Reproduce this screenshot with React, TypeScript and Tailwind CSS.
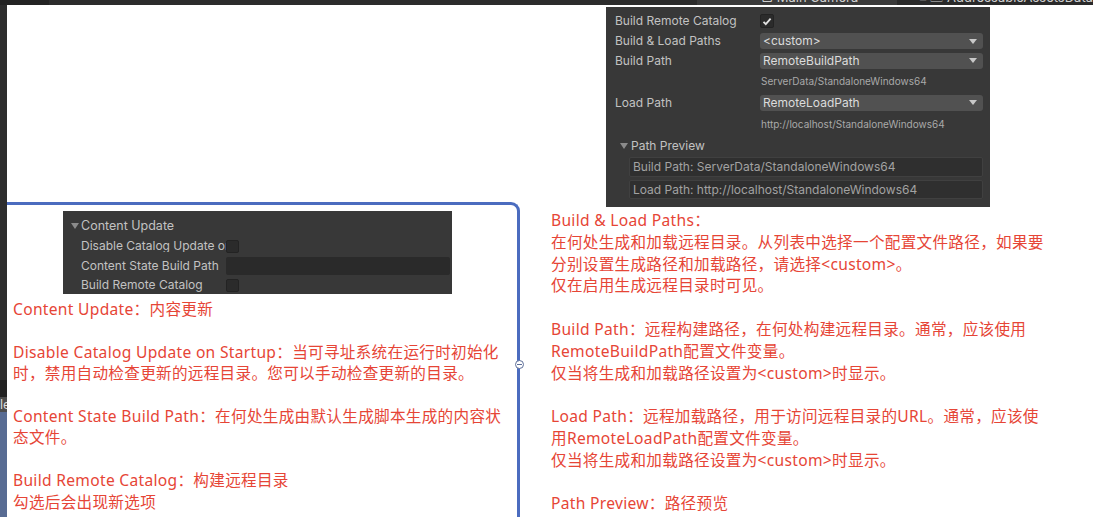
import React from 'react';

const RED = 'text-[#e64536]';

function Arrow() {
  return (
    <svg width="8" height="5" viewBox="0 0 8 5" className="shrink-0">
      <path d="M0 0h8L4 5z" fill="#c8c8c8" />
    </svg>
  );
}

function Fold() {
  return (
    <svg width="8" height="6" viewBox="0 0 8 6" className="shrink-0">
      <path d="M0 0h8L4 6z" fill="#8a8a8a" />
    </svg>
  );
}

function Dropdown({ value }: { value: string }) {
  return (
    <div className="w-[223px] h-[16px] bg-[#515151] rounded-[3px] flex items-center justify-between pl-[3px] pr-[6px] text-[12px] text-[#dcdcdc]">
      <span>{value}</span>
      <Arrow />
    </div>
  );
}

function Checkbox({ checked, size = 14 }: { checked?: boolean; size?: number }) {
  return (
    <div
      className="bg-[#2b2b2b] border border-[#232323] rounded-[2px] flex items-center justify-center"
      style={{ width: size, height: size }}
    >
      {checked && (
        <svg width="10" height="9" viewBox="0 0 10 9">
          <path d="M1.5 4.8 3.8 7.2 8.6 1.6" stroke="#e2e2e2" strokeWidth="1.8" fill="none" />
        </svg>
      )}
    </div>
  );
}

function RemotePanel() {
  return (
    <div className="w-[384px] h-[200px] bg-[#383838] pt-[4px] pl-[9px] pr-[7px] pb-[8px] text-[12px] text-[#c2c2c2] font-['Inter',sans-serif] leading-none">
      <div className="h-[20px] flex items-center">
        <div className="w-[145px]">Build Remote Catalog</div>
        <Checkbox checked />
      </div>
      <div className="h-[20px] flex items-center">
        <div className="w-[145px]">Build &amp; Load Paths</div>
        <Dropdown value="<custom>" />
      </div>
      <div className="h-[19px] flex items-center">
        <div className="w-[145px]">Build Path</div>
        <Dropdown value="RemoteBuildPath" />
      </div>
      <div className="h-[22px] flex items-center pl-[146px] text-[10px] text-[#a9a9a9]">
        ServerData/StandaloneWindows64
      </div>
      <div className="h-[21px] flex items-center">
        <div className="w-[145px]">Load Path</div>
        <Dropdown value="RemoteLoadPath" />
      </div>
      <div className="h-[22px] flex items-center pl-[146px] text-[10px] text-[#a9a9a9]">
        http://localhost/StandaloneWindows64
      </div>
      <div className="h-[21px] flex items-center gap-[3px] pl-[5px] text-[12px]">
        <Fold />
        <span>Path Preview</span>
      </div>
      <div className="ml-[14px] mt-[1px] h-[20px] bg-[#2f2f2f] border border-[#404040] rounded-[2px] flex items-center pl-[3px] text-[12px] text-[#a2a2a2]">
        Build Path: ServerData/StandaloneWindows64
      </div>
      <div className="ml-[14px] mt-[3px] h-[19px] bg-[#2f2f2f] border border-[#404040] rounded-[2px] flex items-center pl-[3px] text-[12px] text-[#a2a2a2]">
        Load Path: http://localhost/StandaloneWindows64
      </div>
    </div>
  );
}

function ContentUpdatePanel() {
  return (
    <div className="w-[389px] h-[83px] bg-[#383838] pt-[5px] pl-[8px] pr-[2px] overflow-hidden text-[12px] text-[#c2c2c2] font-['Inter',sans-serif] leading-none">
      <div className="h-[20px] flex items-center gap-[2px] text-[12.5px]">
        <Fold />
        <span>Content Update</span>
      </div>
      <div className="h-[20px] flex items-center pl-[10px]">
        <div className="w-[145px] overflow-hidden whitespace-nowrap">Disable Catalog Update on Startup</div>
        <Checkbox size={13} />
      </div>
      <div className="h-[20px] flex items-center pl-[10px]">
        <div className="w-[145px] whitespace-nowrap">Content State Build Path</div>
        <div className="w-[224px] h-[18px] bg-[#2a2a2a] rounded-[2px]" />
      </div>
      <div className="h-[18px] flex items-center pl-[10px]">
        <div className="w-[145px] whitespace-nowrap">Build Remote Catalog</div>
        <Checkbox size={13} />
      </div>
    </div>
  );
}

function Para({ lines, last }: { lines: string[]; last?: boolean }) {
  return (
    <div className={last ? '' : 'mb-[1lh]'}>
      {lines.map((l) => (
        <div key={l} className="whitespace-nowrap">
          {l}
        </div>
      ))}
    </div>
  );
}

const leftNotes = [
  ['Content Update：内容更新'],
  ['Disable Catalog Update on Startup：当可寻址系统在运行时初始化', '时，禁用自动检查更新的远程目录。您可以手动检查更新的目录。'],
  ['Content State Build Path：在何处生成由默认生成脚本生成的内容状', '态文件。'],
  ['Build Remote Catalog：构建远程目录', '勾选后会出现新选项'],
];

const rightNotes = [
  [
    'Build & Load Paths：',
    '在何处生成和加载远程目录。从列表中选择一个配置文件路径，如果要',
    '分别设置生成路径和加载路径，请选择<custom>。',
    '仅在启用生成远程目录时可见。',
  ],
  ['Build Path：远程构建路径，在何处构建远程目录。通常，应该使用', 'RemoteBuildPath配置文件变量。', '仅当将生成和加载路径设置为<custom>时显示。'],
  ['Load Path：远程加载路径，用于访问远程目录的URL。通常，应该使', '用RemoteLoadPath配置文件变量。', '仅当将生成和加载路径设置为<custom>时显示。'],
  ['Path Preview：路径预览'],
];

export default function App() {
  return (
    <div className="w-[1093px] h-[517px] bg-[#2c2c2c] flex flex-col overflow-hidden">
      {/* editor strip at the very top */}
      <div className="h-[5px] flex overflow-hidden text-[13px] text-[#cfcfcf] font-['Inter',sans-serif] leading-none">
        <div className="w-[50px] bg-[#232323]" />
        <div className="w-[658px] bg-[#2c2c2c]" />
        <div className="w-[202px] bg-[#3a3a3a] pl-[64px] -mt-[9px]">▢ Main Camera</div>
        <div className="flex-1 bg-[#2a2a2a] pl-[22px] -mt-[9px] whitespace-nowrap">≡ 🗀 AddressableAssetsData</div>
      </div>

      <div className="flex flex-1">
        {/* editor strip on the left */}
        <div className="w-[7px] flex flex-col">
          <div className="h-[375px] bg-[#2d2d2d]" />
          <div className="h-[17px] bg-[#222222]" />
          <div className="h-[15px] bg-[#4d4d4d] text-[12px] text-[#dddddd] leading-[15px] overflow-hidden">le</div>
          <div className="flex-1 bg-[#586c93]" />
        </div>

        <div className="flex-1 bg-white flex font-['Noto_Sans','Noto_Sans_CJK_SC',sans-serif] tracking-[0.3px]">
          <div className="w-[513px] flex flex-col">
            <div className="h-[197px]" />
            <div className="relative flex-1 border-t-[3px] border-r-[3px] border-[#4b6cbf] rounded-tr-[9px]">
              <div className="mt-[6px] ml-[56px] tracking-normal">
                <ContentUpdatePanel />
              </div>
              <div className={`mt-[5px] pl-[6px] text-[15.6px] leading-[21.4px] ${RED}`}>
                {leftNotes.map((p, i) => (
                  <Para key={i} lines={p} last={i === leftNotes.length - 1} />
                ))}
              </div>
              <div className="absolute right-[-7px] top-[155px] w-[9px] h-[9px] rounded-full border border-[#5d6e98] bg-white flex items-center justify-center">
                <div className="w-[5px] h-px bg-[#5d6e98]" />
              </div>
            </div>
          </div>

          <div className="flex-1 flex flex-col">
            <div className="mt-[2px] ml-[86px] tracking-normal">
              <RemotePanel />
            </div>
            <div className={`mt-[3px] pl-[31px] text-[15.6px] leading-[21.8px] ${RED}`}>
              {rightNotes.map((p, i) => (
                <Para key={i} lines={p} last={i === rightNotes.length - 1} />
              ))}
            </div>
          </div>
        </div>
      </div>
    </div>
  );
}
